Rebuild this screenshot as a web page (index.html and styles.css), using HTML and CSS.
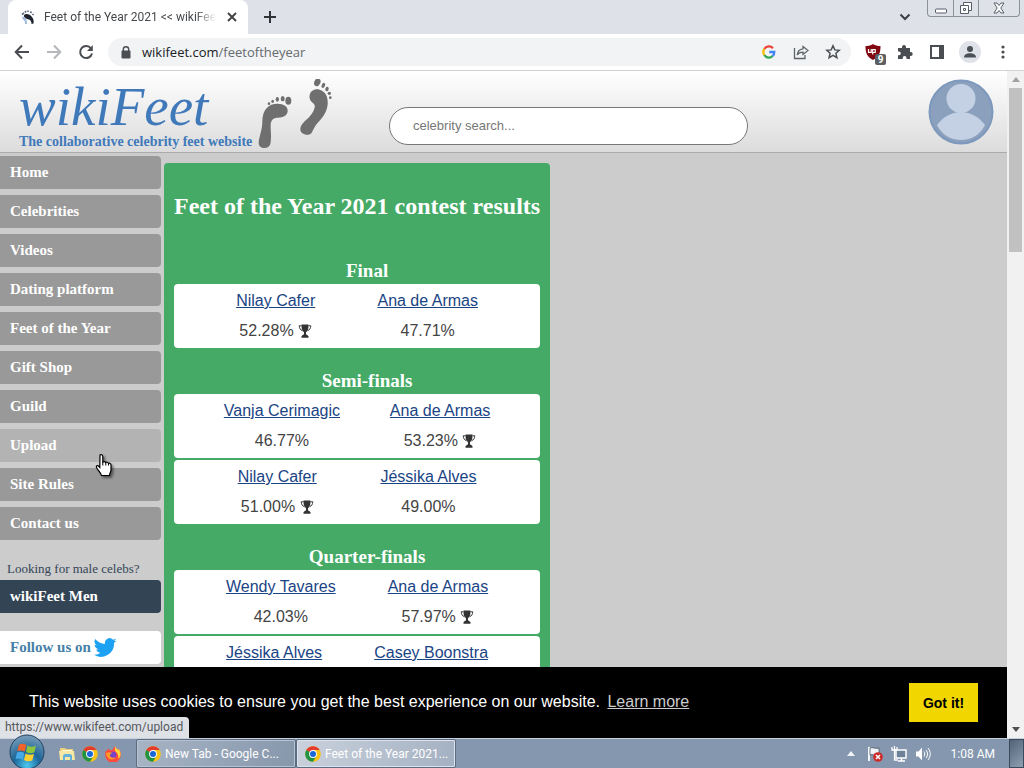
FILE: index.html
```html
<!DOCTYPE html>
<html lang="en">
<head>
<meta charset="utf-8">
<title>Feet of the Year 2021 &lt;&lt; wikiFeet</title>
<link rel="stylesheet" href="styles.css">
</head>
<body>
<svg class="defs" aria-hidden="true">
  <symbol id="trophy" viewBox="0 0 14 14">
    <path d="M3.500 .5h7c.1 4-.5 6.500-2.500 7.700v2.300c1.300.3 2 .9 2 1.600h.5v1.600h-7v-1.600H4c0-.7.700-1.300 2-1.600V8.200C4 7 3.400 4.500 3.500 .5z" fill="#333"/>
    <path d="M3.500 1.800H1.200c.2 2.700 1.200 4 3.200 5M10.500 1.800h2.300c-.2 2.700-1.200 4-3.200 5" fill="none" stroke="#333"/>
  </symbol>
  <symbol id="chrome" viewBox="0 0 16 16">
    <circle cx="8" cy="8" r="7.800" fill="#fbc116"/>
    <path d="M8 8 1.250 4.100A7.800 7.800 0 0 1 14.750 4.100H8z" fill="#e33b2e"/>
    <path d="M1.250 4.100A7.800 7.800 0 0 0 8 15.800L11.400 9.950 8 8z" fill="#229342"/>
    <circle cx="8" cy="8" r="3.900" fill="#fff"/>
    <circle cx="8" cy="8" r="3" fill="#1a66d6"/>
  </symbol>
</svg>

<header class="tabstrip">
  <div class="tab">
    <svg class="favicon" viewBox="0 0 16 16"><path d="M4 6c2-2 6-1 8 2 1.500 2 2 4 1.500 6.500l-2 .5c0-2-.5-3.500-2.500-4.500C6 9.500 3.500 9 4 6z" fill="#1e2430"/><path d="M2 8c2-1 4 1 4.500 3L7 15H5c0-3-.5-4-2-4.500z" fill="#9db7d8"/><path d="M2 5.500 4 4M5 3.500 6 2M8 3V1.500M10.500 4l.8-1.500M12.500 6l1-1" stroke="#59677b" stroke-width="1.600"/></svg>
    <span class="tab-title">Feet of the Year 2021 &lt;&lt; wikiFeet</span>
    <button class="icon-btn" aria-label="Close tab"><svg width="10" height="10" viewBox="0 0 10 10"><path d="m1 1 8 8m0-8L1 9" stroke="#3c4043" stroke-width="1.800"/></svg></button>
  </div>
  <button class="icon-btn new-tab" aria-label="New tab"><svg width="14" height="14" viewBox="0 0 14 14"><path d="M7 1v12M1 7h12" stroke="#303236" stroke-width="2"/></svg></button>
  <button class="icon-btn tab-search" aria-label="Search tabs"><svg width="12" height="8" viewBox="0 0 12 8"><path d="m1.500 1.500 4.500 4.500 4.500-4.500" fill="none" stroke="#3c4043" stroke-width="2"/></svg></button>
  <div class="window-controls">
    <button aria-label="Minimize"><svg width="14" height="14" viewBox="0 0 14 14"><rect x="1.500" y="8" width="11" height="4" rx="1" fill="#fff" stroke="#555d68"/></svg></button>
    <button aria-label="Restore"><svg width="14" height="14" viewBox="0 0 14 14"><path d="M4.500 1.500h8v8h-8z" fill="#fff" stroke="#555d68"/><path d="M1.500 4.500h8v8h-8z" fill="#fff" stroke="#555d68"/><path d="M4.500 7.500h2v2h-2z" fill="none" stroke="#555d68"/></svg></button>
    <button class="close" aria-label="Close"><svg width="14" height="12" viewBox="0 0 14 12"><path d="M2 1h3l2 2.500L9 1h3L8.800 6l3.200 5H9L7 8.500 5 11H2l3.200-5z" fill="#fff" stroke="#555d68"/></svg></button>
  </div>
</header>

<nav class="toolbar" aria-label="Browser toolbar">
  <button class="icon-btn" aria-label="Back"><svg width="16" height="16" viewBox="0 0 16 16"><path d="M15 8H2m6-6.500L1.700 8 8 14.500" fill="none" stroke="#4a4d51" stroke-width="2"/></svg></button>
  <button class="icon-btn" aria-label="Forward"><svg width="16" height="16" viewBox="0 0 16 16"><path d="M1 8h13M8 1.500 14.300 8 8 14.500" fill="none" stroke="#b5b7ba" stroke-width="2"/></svg></button>
  <button class="icon-btn" aria-label="Reload"><svg width="16" height="16" viewBox="0 0 16 16"><path d="M13 4.500A6 6 0 1 0 14 9.500" fill="none" stroke="#4a4d51" stroke-width="2"/><path d="M14.800 1v6H9z" fill="#4a4d51"/></svg></button>
  <div class="omnibox">
    <svg width="10" height="13" viewBox="0 0 10 13"><path d="M2.300 5V3.500a2.700 2.700 0 0 1 5.400 0V5" fill="none" stroke="#4a4d51" stroke-width="1.400"/><rect x=".5" y="4.500" width="9" height="8" rx="1" fill="#4a4d51"/></svg>
    <span class="url">wikifeet.com<span class="path">/feetoftheyear</span></span>
    <button class="icon-btn" aria-label="Google Lens"><svg width="14" height="14" viewBox="0 0 14 14" fill="none" stroke-width="2.300"><path d="M2.300 4A5.300 5.300 0 0 1 10.900 3.200" stroke="#ea4335"/><path d="M2.300 4a5.500 5.500 0 0 0 0 6" stroke="#fbbc05"/><path d="M2.300 10a5.300 5.300 0 0 0 8.300 1" stroke="#34a853"/><path d="M10.600 11A5.500 5.500 0 0 0 12.300 7H7.300" stroke="#4285f4"/></svg></button>
    <button class="icon-btn" aria-label="Share"><svg width="16" height="16" viewBox="0 0 16 16" fill="none" stroke="#5f6368" stroke-width="1.300"><path d="M1.500 4v10.500H12V11"/><path d="M10 2.500 15 6.500l-5 4V8.200C7.500 8.200 5.500 9 4.200 11c.3-3.500 2.300-5.700 5.800-6.200z"/></svg></button>
    <button class="icon-btn" aria-label="Bookmark"><svg width="16" height="16" viewBox="0 0 16 16"><path d="m8 1.800 1.800 4.100 4.400.4-3.300 3 1 4.400L8 11.400l-3.900 2.300 1-4.400-3.300-3 4.400-.4z" fill="none" stroke="#4a4d51" stroke-width="1.500"/></svg></button>
  </div>
  <button class="icon-btn ublock" aria-label="uBlock Origin"><svg width="16" height="16" viewBox="0 0 16 16"><path d="M8 0c2 1.500 4.500 2 7.500 2 0 7-1.500 11-7.500 14C2 13 .5 9 .5 2 3.500 2 6 1.500 8 0z" fill="#800610"/><path d="M3.500 5v3.300h2.700V5m1.500 3.500v2m0-5v3h2.500V5.500z" fill="none" stroke="#fff" stroke-width="1.200"/></svg><span class="count">9</span></button>
  <button class="icon-btn" aria-label="Extensions"><svg width="16" height="16" viewBox="0 0 16 16"><path d="M1 4h4V3a2 2 0 0 1 4 0v1h4v4h.7a2 2 0 0 1 0 4H13v3H9.500v-1a1.900 1.900 0 0 0-3.800 0v1H1v-3.800h1a1.800 1.800 0 0 0 0-3.600H1z" fill="#4a4d51"/></svg></button>
  <button class="icon-btn" aria-label="Side panel"><svg width="14" height="14" viewBox="0 0 14 14"><path d="M1 1h12v12H1z" fill="#fff" stroke="#4a4d51" stroke-width="2"/><path d="M9 1h4v12H9z" fill="#4a4d51"/></svg></button>
  <button class="icon-btn profile" aria-label="Profile"><svg width="14" height="14" viewBox="0 0 14 14"><circle cx="7" cy="4" r="3" fill="#4a4f58"/><path d="M1 12.500c0-3 3-4.200 6-4.200s6 1.200 6 4.200z" fill="#4a4f58"/></svg></button>
  <button class="icon-btn" aria-label="Menu"><svg width="4" height="14" viewBox="0 0 4 14" fill="#4a4d51"><circle cx="2" cy="2" r="1.600"/><circle cx="2" cy="7" r="1.600"/><circle cx="2" cy="12" r="1.600"/></svg></button>
</nav>

<div class="viewport">
  <div class="page">
    <div class="site">
      <header class="site-header">
        <a class="logo" href="#">
          <span class="brand"><span class="name">wikiFeet</span><span class="tagline">The collaborative celebrity feet website</span></span>
          <svg class="footprints" width="76" height="72" viewBox="24 12 228 216" fill="#6f6f6f">
            <path d="M37 138c1-34 18-52 46-52 18 0 31 9 30 22-1 14-14 20-28 20-16 0-22 8-23 20-1 16 3 34 0 54-2 13-9 17-18 17-11 0-19-6-18-18 3-22 11-36 11-63z"/>
            <ellipse cx="115" cy="77" rx="9" ry="12"/><ellipse cx="98" cy="71" rx="6" ry="8"/><ellipse cx="82" cy="73" rx="5" ry="7"/><ellipse cx="68" cy="79" rx="4" ry="5"/><circle cx="57" cy="86" r="4"/>
            <path d="M179 60c3-13 16-20 30-16 17 5 26 21 24 44-2 26-18 43-31 57-9 10-12 20-17 28-8 12-36 5-34-12 2-14 14-22 26-34 12-13 19-28 17-36-3-9-19-12-15-31z"/>
            <ellipse cx="202" cy="22" rx="9" ry="12" transform="rotate(25 202 22)"/><ellipse cx="220" cy="31" rx="5" ry="8" transform="rotate(25 220 31)"/><ellipse cx="231" cy="42" rx="5" ry="7" transform="rotate(15 231 42)"/><circle cx="238" cy="55" r="5"/><circle cx="241" cy="68" r="4"/>
          </svg>
        </a>
        <form class="search"><input type="text" aria-label="Celebrity search" placeholder="celebrity search..."></form>
        <a class="avatar" href="#" aria-label="Profile"><svg width="66" height="66" viewBox="0 0 66 66"><circle cx="33" cy="33" r="31.500" fill="#8ba0bd" stroke="#7d98bd" stroke-width="2"/><circle cx="33" cy="19.500" r="14.500" fill="#c4d1e4"/><path d="M9 46c6-8 15-13 24-13s18 5 24 13c-5 10-14 15-24 15S14 56 9 46z" fill="#c4d1e4"/></svg></a>
      </header>
      <div class="columns">
        <nav class="sidebar" aria-label="Site">
          <a href="#">Home</a>
          <a href="#">Celebrities</a>
          <a href="#">Videos</a>
          <a href="#">Dating platform</a>
          <a href="#">Feet of the Year</a>
          <a href="#">Gift Shop</a>
          <a href="#">Guild</a>
          <a class="hovered" href="#">Upload</a>
          <a href="#">Site Rules</a>
          <a href="#">Contact us</a>
          <p>Looking for male celebs?</p>
          <a class="men" href="#">wikiFeet Men</a>
          <a class="follow" href="#">Follow us on <svg width="24" height="20" viewBox="0 0 24 20"><path d="M23.500 2.400c-.8.400-1.700.6-2.600.7.900-.6 1.600-1.500 2-2.500-.9.500-1.800.9-2.900 1.100a4.700 4.700 0 0 0-8 4.300C8.100 5.800 4.600 4 2.300 1a4.700 4.700 0 0 0 1.400 6.200c-.7 0-1.400-.2-2.100-.6 0 2.300 1.600 4.200 3.700 4.700-.7.200-1.400.2-2.100.1.600 1.900 2.300 3.200 4.300 3.300A9.300 9.300 0 0 1 .6 16.600 13.300 13.300 0 0 0 21.100 4.800c.9-.6 1.700-1.400 2.400-2.400z" fill="#1da1f2"/></svg></a>
        </nav>
        <main class="results">
          <h1>Feet of the Year 2021 contest results</h1>
          <section>
            <h2>Final</h2>
            <div class="match">
              <div><a href="#">Nilay Cafer</a><span>52.28% <svg class="cup"><use href="#trophy"/></svg></span></div>
              <div><a href="#">Ana de Armas</a><span>47.71%</span></div>
            </div>
          </section>
          <section>
            <h2>Semi-finals</h2>
            <div class="match">
              <div><a href="#">Vanja Cerimagic</a><span>46.77%</span></div>
              <div><a href="#">Ana de Armas</a><span>53.23% <svg class="cup"><use href="#trophy"/></svg></span></div>
            </div>
            <div class="match">
              <div><a href="#">Nilay Cafer</a><span>51.00% <svg class="cup"><use href="#trophy"/></svg></span></div>
              <div><a href="#">Jéssika Alves</a><span>49.00%</span></div>
            </div>
          </section>
          <section>
            <h2>Quarter-finals</h2>
            <div class="match">
              <div><a href="#">Wendy Tavares</a><span>42.03%</span></div>
              <div><a href="#">Ana de Armas</a><span>57.97% <svg class="cup"><use href="#trophy"/></svg></span></div>
            </div>
            <div class="match">
              <div><a href="#">Jéssika Alves</a></div>
              <div><a href="#">Casey Boonstra</a></div>
            </div>
          </section>
        </main>
      </div>
    </div>
    <div class="cookies">
      <p>This website uses cookies to ensure you get the best experience on our website. <a href="#">Learn more</a></p>
      <button>Got it!</button>
    </div>
    <div class="status">https://www.wikifeet.com/upload</div>
  </div>
  <div class="scrollbar">
    <svg width="8" height="5" viewBox="0 0 8 5"><path d="M0 5 4 0l4 5z" fill="#a0a0a0"/></svg>
    <div class="thumb"></div>
    <svg width="8" height="5" viewBox="0 0 8 5"><path d="m0 0 4 5 4-5z" fill="#505050"/></svg>
  </div>
  <svg class="pointer" width="20" height="26" viewBox="0 0 20 26"><path d="M5 2c1.300-1 2.700 0 2.800 1.500V9c1-.8 2.500-.5 2.900.5 1-.6 2.300-.2 2.700.8 1.300-.5 2.600.3 2.600 2V17c0 2-1.500 3-1.500 5.500h-8C6 19.500 3 17.500 1.500 14.500.8 13 2.500 12 3.500 13l1.300 1.500z" fill="#fff" stroke="#000" stroke-width="1.200"/><path d="M7.800 9v3.500m3-3v3m2.700-2.200v2.200" stroke="#000"/></svg>
</div>

<footer class="taskbar">
  <button class="start" aria-label="Start"><svg width="36" height="30" viewBox="0 0 36 30"><defs><radialGradient id="orb" cx=".5" cy=".9" r=".9"><stop offset="0" stop-color="#4cc8f0"/><stop offset=".45" stop-color="#1c6598"/><stop offset="1" stop-color="#7d9fba"/></radialGradient></defs><circle cx="18" cy="13" r="17" fill="url(#orb)" stroke="#20405f"/><path d="M10 5.500c2.500-1.300 5-1 7.300.5l-1.600 6.700c-2.300-1.500-4.700-1.700-7.300-.6z" fill="#f0622a"/><path d="M18.500 6.500c2.600 1.500 5.500 1.500 8.500.3l-1.700 6.600c-3 1.200-5.700 1.100-8.300-.4z" fill="#8cc63f"/><path d="M8 13.500c2.600-1.100 5-.9 7.300.6l-1.600 6.600c-2.300-1.500-4.700-1.700-7.300-.6z" fill="#47a9e8"/><path d="M16.600 14.500c2.600 1.500 5.400 1.600 8.400.4l-1.700 6.600c-3 1.200-5.700 1.100-8.300-.4z" fill="#fdcf2f"/></svg></button>
  <div class="quick">
    <button class="icon-btn" aria-label="Explorer"><svg width="16" height="16" viewBox="0 0 16 16"><path d="M1 2h5l1 1h7v11H1z" fill="#e9cf79"/><path d="M3 4h10v6H3z" fill="#fff8d4"/><path d="M0 5h15l1 9H1z" fill="#f7e7a4"/><path d="M4 15v-5c0-1 1-2 2-2h5c1 0 2 1 2 2v5h-2v-4H6v4z" fill="#62b1dc"/></svg></button>
    <button class="icon-btn" aria-label="Chrome"><svg width="16" height="16"><use href="#chrome"/></svg></button>
    <button class="icon-btn" aria-label="Firefox"><svg width="16" height="16" viewBox="0 0 16 16"><path d="M1 4c0 1 .3 1.200.5 1.500L3 2.500l2 1.800c1-.3 2-.3 2.500 0C8 2 9 1 10.500.2c.3 2.300 1.700 2.800 2.700 3.800l.6-1C15.500 5 16 7 15.800 9A7.800 7.800 0 0 1 .2 9C0 7 .4 5.300 1 4z" fill="#ff4a3c"/><path d="M10.500.2c.3 2.300 1.700 2.800 2.700 3.800l.6-1C16.500 7.500 16 11 13 13c1-3 0-5-2-7-1.300-1.500-1.700-3.500-.5-5.800z" fill="#ffd43d"/><circle cx="8" cy="9" r="3.400" fill="#7842c8"/><path d="M1 7c2-1 4-1 7 0-2 .3-3 1-3 2.500 0 2 3 3 5.500 1.500-1 3-6 3.500-8 0C1.700 10 1 8.500 1 7z" fill="#ff9a27"/></svg></button>
  </div>
  <button class="task"><svg width="16" height="16"><use href="#chrome"/></svg><span>New Tab - Google C...</span></button>
  <button class="task active"><svg width="16" height="16"><use href="#chrome"/></svg><span>Feet of the Year 2021...</span></button>
  <div class="tray">
    <svg width="8" height="5" viewBox="0 0 8 5"><path d="M0 5 4 0l4 5z" fill="#eef3f8"/></svg>
    <svg width="16" height="16" viewBox="0 0 16 16"><path d="M2 1v14" stroke="#fff" stroke-width="1.800"/><path d="M3 2c3-1.500 5 1.500 9 0v7c-4 1.500-6-1.500-9 0z" fill="#eef1f5" stroke="#39485a" stroke-width=".7"/><circle cx="11" cy="11" r="4.800" fill="#cf2a2a"/><path d="m9 9 4 4m0-4-4 4" stroke="#fff" stroke-width="1.500"/></svg>
    <svg width="16" height="16" viewBox="0 0 16 16"><path d="M5 4h10v8H5z" fill="#6d8198" stroke="#fff" stroke-width="1.500"/><path d="M7 15h7m-3.500-3v3" stroke="#fff" stroke-width="1.500"/><path d="M1 1v3h5V1M3.500 0v4m0 0v10H7" fill="none" stroke="#fff" stroke-width="1.300"/></svg>
    <svg width="16" height="16" viewBox="0 0 16 16"><path d="M1 5.500h2.500L7 1.500v13l-3.500-4H1z" fill="#fff"/><path d="M9 5.500c1 1.500 1 3.500 0 5M11 4c2 2.500 2 5.500 0 8m2-10c3 4 3 8 0 12" fill="none" stroke="#fff"/></svg>
    <time>1:08 AM</time>
  </div>
  <button class="show-desktop" aria-label="Show desktop"></button>
</footer>
</body>
</html>
```

FILE: styles.css
```css
* { box-sizing: border-box; }

body {
  margin: 0;
  height: 100vh;
  display: flex;
  flex-direction: column;
  overflow: hidden;
  font-family: Roboto, "Noto Sans", sans-serif;
  font-size: 12px;
}

button { font: inherit; border: 0; padding: 0; cursor: pointer; }
svg { flex: none; }
.defs { position: absolute; width: 0; height: 0; }

.icon-btn {
  display: flex;
  align-items: center;
  justify-content: center;
  flex: none;
  min-width: 16px;
  height: 24px;
  background: none;
}

/* Tab strip */
.tabstrip {
  display: flex;
  align-items: flex-start;
  flex: none;
  height: 34px;
  background: #dee1e8;
}
.tab {
  display: flex;
  align-items: center;
  gap: 8px;
  width: 240px;
  height: 34px;
  margin-left: 8px;
  padding: 0 8px 0 12px;
  border-radius: 8px 8px 0 0;
  background: #fff;
  color: #45484c;
}
.favicon { width: 16px; height: 16px; }
.tab-title {
  flex: 1;
  overflow: hidden;
  white-space: nowrap;
  mask-image: linear-gradient(90deg, #000 88%, transparent);
}
.new-tab { width: 28px; height: 34px; margin-left: 8px; }
.tab-search { height: 34px; margin-left: auto; }
.window-controls {
  display: flex;
  margin: 0 4px 0 14px;
  border: 1px solid #8a919b;
  border-top: 0;
  border-radius: 0 0 4px 4px;
}
.window-controls button {
  display: flex;
  align-items: center;
  justify-content: center;
  width: 25px;
  height: 16px;
  background: none;
}
.window-controls button + button { border-left: 1px solid #8a919b; }
.window-controls .close { width: 41px; }

/* Toolbar */
.toolbar {
  display: flex;
  align-items: center;
  gap: 16px;
  flex: none;
  height: 37px;
  padding: 0 13px 0 14px;
  border-bottom: 1px solid #d0d2d4;
  background: #fff;
}
.omnibox {
  display: flex;
  align-items: center;
  gap: 16px;
  flex: 1;
  height: 28px;
  margin: 0 -2px;
  padding: 0 10px 0 13px;
  border-radius: 14px;
  background: #f1f3f4;
}
.url { flex: 1; margin-left: -5px; font-family: "Open Sans", sans-serif; font-size: 13px; color: #202124; }
.path { color: #666a6e; }
.ublock { position: relative; }
.count {
  position: absolute;
  left: 10px;
  top: 14px;
  width: 11px;
  border-radius: 2px;
  background: #5b5f63;
  color: #fff;
  font-size: 10px;
  font-weight: 700;
  line-height: 11px;
}
.profile { width: 22px; height: 22px; margin: 0 -2px; border-radius: 50%; background: #dfe2e8; }

/* Web page */
.viewport { position: relative; display: flex; flex: 1; min-height: 0; }
.page { position: relative; display: flex; flex-direction: column; flex: 1; min-width: 0; }
.site { flex: 1; min-height: 0; overflow: hidden; background: #ccc; font-family: "Liberation Serif", serif; }

.site-header {
  display: flex;
  align-items: flex-start;
  height: 82px;
  padding: 8px 13px 0 19px;
  border-bottom: 1px solid #aaa;
  background: linear-gradient(#fff, #dcdcdc);
}
.logo { display: flex; gap: 8px; text-decoration: none; }
.brand { display: flex; flex-direction: column; width: 231px; white-space: nowrap; color: #4079ba; }
.name { font-size: 55px; font-style: italic; line-height: 55px; }
.tagline { font-size: 14px; font-weight: 700; line-height: 16px; }
.search { flex: 0 1 359px; margin: 28px auto 0 55px; }
.search input {
  width: 100%;
  height: 38px;
  padding: 0 23px 2px;
  border: 1px solid #777;
  border-radius: 19px;
  background: #fff;
  font: 13px "Liberation Sans", sans-serif;
}
.search input::placeholder { color: #777; }

.columns { display: flex; align-items: flex-start; gap: 3px; }
.sidebar { display: flex; flex-direction: column; gap: 6px; width: 161px; padding-top: 3px; }
.sidebar a {
  display: flex;
  align-items: center;
  gap: 2px;
  height: 33px;
  padding: 0 10px;
  border-radius: 0 4px 4px 0;
  background: #999;
  color: #fff;
  font-size: 15px;
  font-weight: 700;
  text-decoration: none;
}
.sidebar .hovered { background: #b3b3b3; }
.sidebar p { margin: 14px 0 -3px 7px; color: #345; font-size: 13px; line-height: 17px; }
.sidebar .men { background: #345; }
.sidebar .follow { margin-top: 12px; background: #fff; color: #4580a8; }

.results {
  margin-top: 10px;
  padding: 0 10px;
  border-radius: 4px 4px 0 0;
  background: #4a6;
  color: #fff;
  text-align: center;
}
.results h1 { margin: 0; padding: 29px 0 40px; font-size: 24px; line-height: 28px; white-space: nowrap; }
.results h2 { margin: 0; padding: 0 0 2px 20px; font-size: 19px; line-height: 22px; }
.results section { margin-bottom: 22px; }
.match {
  display: flex;
  justify-content: space-evenly;
  min-height: 64px;
  margin-bottom: 2px;
  padding: 2px 0;
  border-radius: 4px;
  background: #fff;
  color: #444;
  font: 16px/30px "Liberation Sans", sans-serif;
}
.match div { display: flex; flex-direction: column; align-items: center; }
.match a { color: #1a4484; }
.cup { width: 14px; height: 14px; vertical-align: -2px; }

/* Cookie notice */
.cookies {
  display: flex;
  align-items: center;
  justify-content: space-between;
  flex: none;
  height: 71px;
  padding: 0 29px;
  background: #000;
  color: #fff;
  font: 16px/24px "Liberation Sans", sans-serif;
}
.cookies p { margin: 0; padding-bottom: 2px; }
.cookies a { margin-left: 3px; color: #ccc; }
.cookies button { width: 69px; height: 39px; background: #f1d600; color: #000; font-size: 14px; font-weight: 700; }

.status {
  position: absolute;
  left: 0;
  bottom: 0;
  height: 21px;
  padding: 0 6px 0 5px;
  border-radius: 0 4px 0 0;
  background: #dee1e6;
  color: #55585c;
  line-height: 21px;
}

.scrollbar {
  display: flex;
  flex-direction: column;
  align-items: center;
  width: 17px;
  padding: 6px 0;
  background: #f1f1f1;
}
.thumb { width: 13px; height: 25%; margin: 6px 0 auto; background: #c1c1c1; }

.pointer { position: absolute; left: 95px; top: 382px; filter: drop-shadow(2px 2px 1px rgba(0, 0, 0, .45)); }

/* Taskbar */
.taskbar {
  display: flex;
  align-items: stretch;
  flex: none;
  height: 30px;
  border-top: 1px solid #c4d0dc;
  background: #8497ae;
  color: #fff;
  position: relative;
}
.start { width: 36px; margin-left: 9px; background: none; }
.start svg { display: block; overflow: visible; }
.quick { display: flex; align-items: center; gap: 7px; margin: 0 15px 0 14px; }
.task {
  display: flex;
  align-items: center;
  gap: 4px;
  width: 160px;
  padding: 0 8px;
  border: 1px solid #5c6c82;
  border-radius: 2px;
  background: linear-gradient(100deg, #a7b4c5, #8797ac);
  box-shadow: inset 0 0 0 1px #b6c2d0;
  color: #fff;
  white-space: nowrap;
}
.task.active { background: linear-gradient(100deg, #c9d1dc, #a4b1c2); box-shadow: inset 0 0 0 1px #dde3ea; }
.tray { display: flex; align-items: center; gap: 8px; margin: 0 14px 0 auto; }
.tray svg:first-child { margin-right: 4px; }
.tray time { margin-left: 12px; }
.show-desktop { width: 15px; border: 1px solid #3d4a5c; background: linear-gradient(135deg, #536276, #8fa0b4); }
```
